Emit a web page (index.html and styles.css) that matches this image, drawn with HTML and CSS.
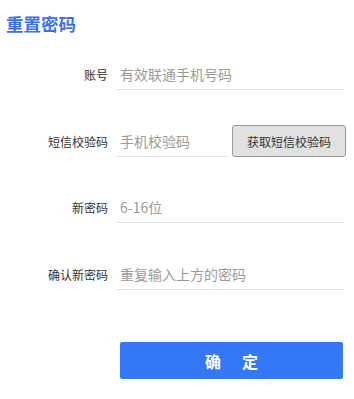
FILE: index.html
```html
<!DOCTYPE html>
<html lang="zh">
<head>
<meta charset="utf-8">
<title>重置密码</title>
<link rel="stylesheet" href="styles.css">
</head>
<body>
<div class="page">
  <h1 class="title">重置密码</h1>
  <form class="form">
    <div class="row">
      <label class="label">账号</label>
      <input class="input" type="text" placeholder="有效联通手机号码">
    </div>
    <div class="row row-code">
      <label class="label">短信校验码</label>
      <input class="input input-short" type="text" placeholder="手机校验码">
      <button type="button" class="code-btn">获取短信校验码</button>
    </div>
    <div class="row">
      <label class="label">新密码</label>
      <input class="input" type="password" placeholder="6-16位">
    </div>
    <div class="row">
      <label class="label">确认新密码</label>
      <input class="input" type="password" placeholder="重复输入上方的密码">
    </div>
    <button type="button" class="submit"><span>确</span><span>定</span></button>
  </form>
</div>
</body>
</html>
```
FILE: styles.css
```css
* { box-sizing: border-box; }
html, body {
  margin: 0;
  padding: 0;
  background: #fff;
  font-family: "Noto Sans CJK SC", "Liberation Sans", sans-serif;
}
.page {
  width: 354px;
  padding-top: 14px;
}
.title {
  margin: 0 0 0 6px;
  font-size: 17.5px;
  line-height: 20px;
  font-weight: bold;
  color: #3d6fe9;
}
.form {
  margin-top: 25px;
  display: flex;
  flex-direction: column;
  width: 344px;
}
.row {
  display: flex;
  align-items: center;
  height: 31px;
  margin-bottom: 36px;
}
.row-code {
  height: 32px;
  margin-top: -1px;
  align-items: flex-end;
  margin-bottom: 35px;
}
.row-code .label { align-self: center; padding-top: 2px; }
.label {
  width: 108px;
  flex: none;
  text-align: right;
  font-size: 12px;
  line-height: 16px;
  color: #333;
  margin-right: 8px;
}
.input {
  flex: 1;
  height: 31px;
  border: none;
  border-bottom: 1px solid #e3e3e3;
  outline: none;
  padding: 0 0 0 4px;
  font-family: "Noto Sans CJK SC", "Liberation Sans", sans-serif;
  font-size: 14px;
  color: #333;
  background: transparent;
}
.input::placeholder { color: #9a9a9a; }
.input-short {
  flex: none;
  width: 112px;
}
.code-btn {
  flex: none;
  width: 114px;
  height: 32px;
  margin-left: 4px;
  margin-right: -2px;
  background: #e1e1e1;
  border: 1px solid #999;
  border-radius: 3px;
  font-family: "Noto Sans CJK SC", "Liberation Sans", sans-serif;
  font-size: 12px;
  color: #333;
  padding: 0;
}
.submit {
  margin: 16px 0 0 120px;
  width: 223px;
  height: 37px;
  background: #3478f6;
  border: none;
  border-radius: 2px;
  color: #fff;
  font-family: "Noto Sans CJK SC", "Liberation Sans", sans-serif;
  font-size: 16px;
  font-weight: bold;
  display: flex;
  justify-content: center;
  align-items: center;
  gap: 21px;
  padding: 0;
}
```
